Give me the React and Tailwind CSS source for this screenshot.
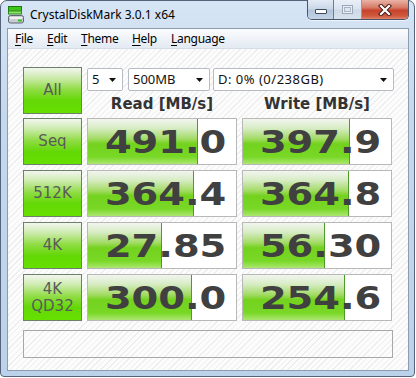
import React from 'react';

const rows = [
  { label: ['Seq'], read: '491.0', write: '397.9', readBar: 110, writeBar: 107 },
  { label: ['512K'], read: '364.4', write: '364.8', readBar: 106, writeBar: 106 },
  { label: ['4K'], read: '27.85', write: '56.30', readBar: 74, writeBar: 82 },
  { label: ['4K', 'QD32'], read: '300.0', write: '254.6', readBar: 104, writeBar: 102 },
];

const menu = [
  { name: 'File', w: 'w-[32px]' },
  { name: 'Edit', w: 'w-[34px]' },
  { name: 'Theme', w: 'w-[51px]' },
  { name: 'Help', w: 'w-[39px]' },
  { name: 'Language', w: 'w-[60px]' },
];

const AppIcon = () => (
  <svg width="17" height="18" viewBox="0 0 17 18">
    <rect x="0.5" y="0.5" width="13" height="5" fill="#3fc41a" stroke="#1f7a12" />
    <rect x="0.5" y="5" width="13" height="3" fill="#8fe36a" stroke="#2d8a1c" />
    <rect x="0.5" y="9.5" width="15" height="7.5" rx="2" fill="#c9ccd0" stroke="#5d6670" />
    <rect x="2" y="11" width="12" height="2" fill="#eef0f2" />
    <rect x="10" y="13.5" width="4" height="2" fill="#33c41e" />
  </svg>
);

const WindowButtons = () => (
  <div className="flex h-[20px] -mt-[1px] border border-t-0 border-[#48566a] rounded-b-[5px] overflow-hidden shadow-[0_1px_0_rgba(255,255,255,0.6)]">
    <div className="w-[26px] flex items-center justify-center pt-[4px] border-r border-[#6c7d92] bg-[linear-gradient(to_bottom,#e3ebf5_0%,#cbd8e8_45%,#b3c5db_55%,#c4d4e6_100%)]">
      <svg width="12" height="5" viewBox="0 0 12 5">
        <rect x="0.5" y="0.5" width="11" height="4" rx="0.5" fill="#ffffff" stroke="#3c4a5c" />
      </svg>
    </div>
    <div className="w-[28px] flex items-center justify-center border-r border-[#8b9bb0] bg-[linear-gradient(to_bottom,#eaf0f7_0%,#dbe4ef_45%,#cdd9e7_55%,#d8e2ee_100%)]">
      <svg width="11" height="9" viewBox="0 0 11 9">
        <rect x="0.5" y="0.5" width="10" height="8" fill="#e9eef5" stroke="#9aa8ba" />
        <rect x="2.5" y="2.5" width="6" height="4" fill="#dfe6ef" stroke="#aab6c6" />
      </svg>
    </div>
    <div className="w-[46px] flex items-center justify-center bg-[linear-gradient(to_bottom,#eab2a4_0%,#d77a66_40%,#c8432c_55%,#cf5a3e_85%,#e2836a_100%)]">
      <svg width="14" height="12" viewBox="0 0 14 12">
        <path d="M3 2 L11 10 M11 2 L3 10" stroke="#4a1c14" strokeWidth="4.2" strokeLinecap="square" />
        <path d="M3 2 L11 10 M11 2 L3 10" stroke="#ffffff" strokeWidth="2.2" strokeLinecap="square" />
      </svg>
    </div>
  </div>
);

const Combo = ({ value, width, tracking = '' }) => (
  <div className={`${width} h-[23px] border border-[#b7bcc4] bg-white rounded-[2px] flex items-center justify-between pl-[4px] pr-[6px] font-['Noto_Sans',sans-serif] text-[13px] text-[#111]`}>
    <span className={tracking}>{value}</span>
    <svg width="7" height="4" viewBox="0 0 7 4">
      <path d="M0 0 H7 L3.5 4 Z" fill="#111" />
    </svg>
  </div>
);

const LabelButton = ({ lines }) => (
  <div className="w-[59px] h-[47px] border border-[#6e7f6a] bg-[linear-gradient(to_bottom,#f2f6ef_0%,#cdebad_22%,#8fdc44_48%,#64d806_72%,#66e000_100%)] flex flex-col items-center justify-center font-['DejaVu_Sans',sans-serif] text-[15px] leading-[17px] text-[#5a5a5a]">
    {lines.map((line) => (
      <span key={line}>{line}</span>
    ))}
  </div>
);

const ValueBox = ({ value, bar }) => (
  <div className="w-[150px] h-[47px] border border-[#b8b8b8] bg-white grid">
    <div
      className="col-start-1 row-start-1 border-r border-[#4e9a2a] bg-[linear-gradient(to_bottom,#f1f5ee_0%,#d8ecc6_20%,#a2db64_44%,#74d21e_55%,#78d826_84%,#ace670_100%)]"
      style={{ width: bar }}
    />
    <div className="col-start-1 row-start-1 flex items-center justify-center pl-[7px] font-['DejaVu_Sans',sans-serif] font-bold text-[32px] leading-none text-[#404040]">
      <span className="inline-block scale-x-[1.2]">{value}</span>
    </div>
  </div>
);

export default function App() {
  return (
    <div className="w-[416px] h-[378px] bg-white overflow-hidden">
      <div className="w-[415px] h-[377px] flex flex-col border border-[#55647a] rounded-t-[7px] rounded-b-[4px] bg-[linear-gradient(to_bottom,#d6e5f5_0%,#c4d8ee_30%,#bcd2ea_100%)]">
        {/* title bar */}
        <div className="h-[27px] flex items-start">
          <div className="flex items-center gap-[5px] pl-[7px] pt-[5px]">
            <AppIcon />
            <span className="font-['Noto_Sans',sans-serif] text-[12px] text-black">CrystalDiskMark 3.0.1 x64</span>
          </div>
          <div className="ml-auto mr-[5px]">
            <WindowButtons />
          </div>
        </div>

        {/* client */}
        <div className="flex-1 ml-[6px] mr-[5px] mb-[5px] flex flex-col border border-[#8c9db0]">
          <div className="h-[20px] pl-[7px] flex items-center border-b border-[#d3dce7] bg-[linear-gradient(to_bottom,#fbfcfe,#e3eaf3)] font-['Noto_Sans',sans-serif] text-[12px] tracking-[-0.3px] text-black">
            {menu.map((item) => (
              <span key={item.name} className={item.w}>
                <span className="underline underline-offset-2">{item.name[0]}</span>
                {item.name.slice(1)}
              </span>
            ))}
          </div>

          <div className="flex-1 pl-[15px] pt-[18px] flex flex-col bg-[repeating-linear-gradient(135deg,#eeeeee_0px,#eeeeee_1px,#fcfcfc_1px,#fcfcfc_4px)]">
            <div className="flex gap-[5px]">
              <LabelButton lines={['All']} />
              <div className="flex flex-col">
                <div className="flex mt-[1px]">
                  <Combo value="5" width="w-[36px]" />
                  <div className="ml-[5px]">
                    <Combo value="500MB" width="w-[82px]" />
                  </div>
                  <div className="ml-[3px]">
                    <Combo value="D: 0% (0/238GB)" width="w-[181px]" tracking="tracking-[0.5px]" />
                  </div>
                </div>
                <div className="flex gap-[5px] mt-[4px] font-['DejaVu_Sans',sans-serif] font-bold text-[15px] leading-[18px] text-[#333]">
                  <span className="w-[150px] text-center">Read [MB/s]</span>
                  <span className="w-[150px] text-center">Write [MB/s]</span>
                </div>
              </div>
            </div>

            <div className="flex flex-col gap-[5px] mt-[4px]">
              {rows.map((row) => (
                <div key={row.label.join()} className="flex gap-[5px]">
                  <LabelButton lines={row.label} />
                  <ValueBox value={row.read} bar={row.readBar} />
                  <ValueBox value={row.write} bar={row.writeBar} />
                </div>
              ))}
            </div>

            <div className="w-[370px] h-[28px] mt-[9px] border border-[#a8a8a8]" />
          </div>
        </div>
      </div>
    </div>
  );
}
